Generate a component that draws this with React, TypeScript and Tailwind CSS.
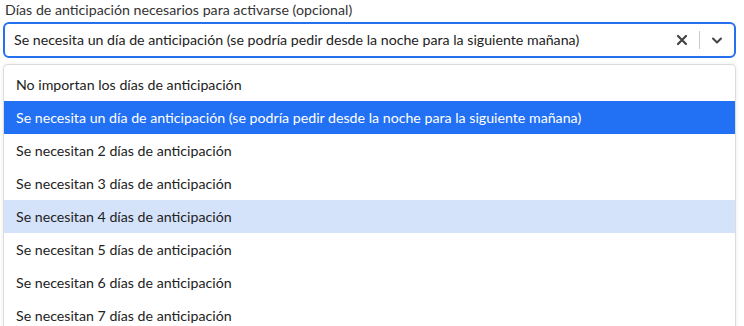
import React from "react";

const OPTIONS = [
  "No importan los días de anticipación",
  "Se necesita un día de anticipación (se podría pedir desde la noche para la siguiente mañana)",
  "Se necesitan 2 días de anticipación",
  "Se necesitan 3 días de anticipación",
  "Se necesitan 4 días de anticipación",
  "Se necesitan 5 días de anticipación",
  "Se necesitan 6 días de anticipación",
  "Se necesitan 7 días de anticipación",
];

const SELECTED = 1;
const HOVERED = 4;

export default function App() {
  return (
    <div className="h-[326px] w-[744px] overflow-hidden bg-white pl-[3px] pr-[8px] pt-[1px] font-['Lato',sans-serif] text-[14.2px] text-[#2b2b2b]">
      <label className="block pl-[2px] leading-[17px] text-[#333]">
        Días de anticipación necesarios para activarse (opcional)
      </label>
      <div className="mt-[4px] flex h-[36px] items-center rounded-[6px] border-2 border-[#2470ee] bg-white pl-[9px] pr-[4px]">
        <span className="flex-1 truncate text-[#222]">{OPTIONS[SELECTED]}</span>
        <div className="flex items-center">
          <span className="flex h-[20px] w-[26px] items-center justify-center text-[#444]">
            <svg width="12" height="12" viewBox="0 0 12 12" fill="none" stroke="currentColor" strokeWidth="2.2" strokeLinecap="round">
              <path d="M2 2l8 8M10 2l-8 8" />
            </svg>
          </span>
          <span className="mx-[4px] h-[18px] w-px bg-[#ccc]" />
          <span className="flex h-[20px] w-[26px] items-center justify-center text-[#444]">
            <svg width="14" height="14" viewBox="0 0 14 14" fill="none" stroke="currentColor" strokeWidth="2" strokeLinecap="round" strokeLinejoin="round">
              <path d="M3 5.5l4 4 4-4" />
            </svg>
          </span>
        </div>
      </div>
      <div className="mt-[6px] rounded-t-[5px] border border-b-0 border-[#dcdcdc] bg-white pt-[3px] shadow-[0_0_4px_rgba(0,0,0,0.08)]">
        {OPTIONS.map((o, i) => (
          <div
            key={o}
            className={
              "flex h-[33px] items-center pl-[12px] " +
              (i === SELECTED
                ? "bg-[#2270f4] text-white"
                : i === HOVERED
                ? "bg-[#d5e3fa] text-[#222]"
                : "text-[#222]")
            }
          >
            {o}
          </div>
        ))}
      </div>
    </div>
  );
}
